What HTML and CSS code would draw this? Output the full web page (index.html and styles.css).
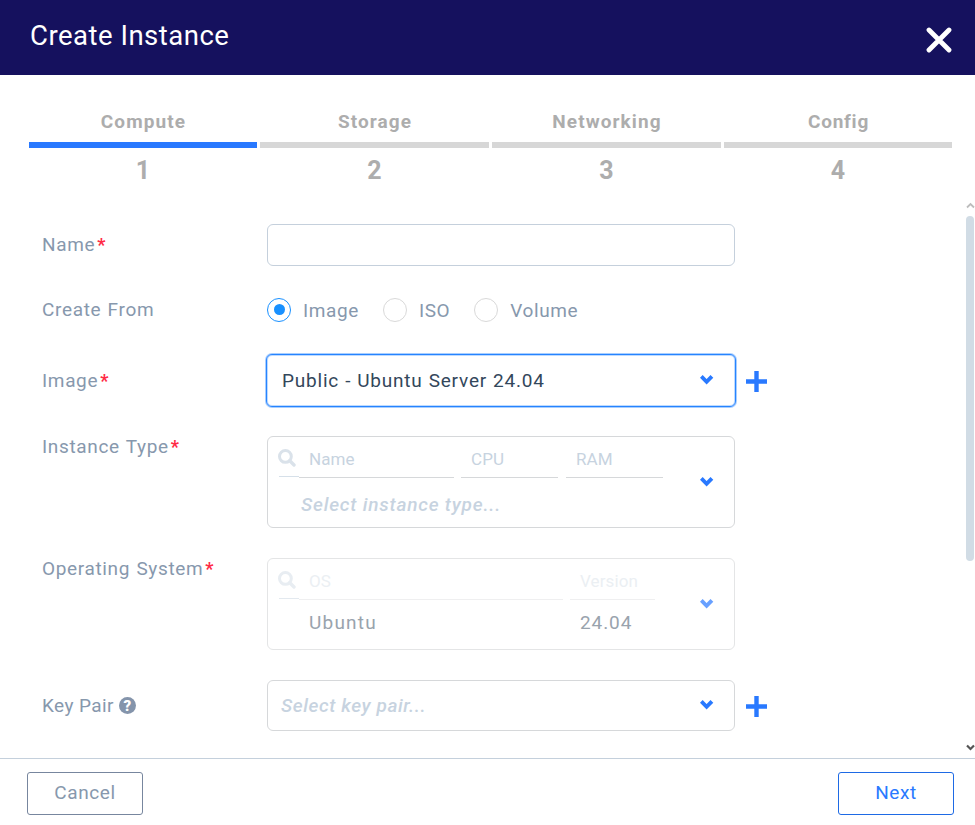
FILE: index.html
```html
<!DOCTYPE html>
<html lang="en">
<head>
<meta charset="utf-8">
<title>Create Instance</title>
<link rel="stylesheet" href="styles.css">
</head>
<body>
<svg class="defs" aria-hidden="true">
  <symbol id="chevron" viewBox="0 0 14 10"><path d="M1.3 1.4 6.6 6.8 11.9 1.4" fill="none" stroke="currentColor" stroke-width="3.9"/></symbol>
  <symbol id="plus" viewBox="0 0 21 21"><path d="M10.5 0v21M0 10.5h21" fill="none" stroke="currentColor" stroke-width="4.4"/></symbol>
  <symbol id="search" viewBox="0 0 18 18"><circle cx="7.4" cy="7.4" r="5.9" fill="none" stroke="currentColor" stroke-width="3"/><path d="m11.8 11.8 4.2 4.2" stroke="currentColor" stroke-width="3.4" stroke-linecap="round"/></symbol>
</svg>
<div class="dialog">
  <header class="header">
    <h1 class="title">Create Instance</h1>
    <svg class="close" viewBox="0 0 26 26"><path d="M3 3 23 23M23 3 3 23" fill="none" stroke="currentColor" stroke-width="4.8" stroke-linecap="round"/></svg>
  </header>
  <nav class="steps">
    <div class="step active"><span class="step-name">Compute</span><span class="bar"></span><span class="step-no">1</span></div>
    <div class="step"><span class="step-name">Storage</span><span class="bar"></span><span class="step-no">2</span></div>
    <div class="step"><span class="step-name">Networking</span><span class="bar"></span><span class="step-no">3</span></div>
    <div class="step"><span class="step-name config">Config</span><span class="bar"></span><span class="step-no">4</span></div>
  </nav>
  <main class="body">
    <form class="form">
      <div class="row name-row"><label class="label">Name<b class="req">*</b></label><input class="box input" type="text"></div>
      <div class="row from-row"><label class="label">Create From</label>
        <div class="radios">
          <span class="radio on"></span><span class="radio-text">Image</span>
          <span class="radio"></span><span class="radio-text">ISO</span>
          <span class="radio"></span><span class="radio-text">Volume</span>
        </div>
      </div>
      <div class="row image-row"><label class="label">Image<b class="req">*</b></label>
        <div class="box select focus"><span class="value">Public - Ubuntu Server 24.04</span><svg class="chevron"><use href="#chevron"/></svg></div>
        <svg class="plus"><use href="#plus"/></svg>
      </div>
      <div class="row table-row"><label class="label">Instance Type<b class="req">*</b></label>
        <div class="box table">
          <div class="cols">
            <div class="filters"><span class="search"><svg><use href="#search"/></svg></span><span class="filter f-name">Name</span><span class="filter f-cpu">CPU</span><span class="filter f-ram">RAM</span></div>
            <div class="placeholder type-hint">Select instance type...</div>
          </div>
          <svg class="chevron"><use href="#chevron"/></svg>
        </div>
      </div>
      <div class="row table-row"><label class="label">Operating System<b class="req">*</b></label>
        <div class="box table disabled">
          <div class="cols">
            <div class="filters"><span class="search"><svg><use href="#search"/></svg></span><span class="filter f-os">OS</span><span class="filter f-version">Version</span></div>
            <div class="values"><span class="v-os">Ubuntu</span><span class="v-version">24.04</span></div>
          </div>
          <svg class="chevron"><use href="#chevron"/></svg>
        </div>
      </div>
      <div class="row key-row"><label class="label key-label">Key Pair<span class="help">?</span></label>
        <div class="box select"><span class="placeholder key-hint">Select key pair...</span><svg class="chevron"><use href="#chevron"/></svg></div>
        <svg class="plus"><use href="#plus"/></svg>
      </div>
    </form>
    <div class="scrollbar">
      <svg class="arrow up" viewBox="0 0 9 7"><path d="M1 5.5 4.5 2 8 5.5" fill="none" stroke="currentColor" stroke-width="1.8"/></svg>
      <span class="thumb"></span>
      <svg class="arrow down" viewBox="0 0 9 7"><path d="M1 1.5 4.5 5 8 1.5" fill="none" stroke="currentColor" stroke-width="2.2"/></svg>
    </div>
  </main>
  <footer class="footer"><button class="btn cancel">Cancel</button><button class="btn next">Next</button></footer>
</div>
</body>
</html>
```
FILE: styles.css
```css
* { box-sizing: border-box; }
body { margin: 0; background: #fff; font-family: Roboto, "Liberation Sans", sans-serif; font-size: 19px; letter-spacing: .5px; color: #8798ad; }
.defs { display: none; }
.dialog { width: 975px; height: 825px; display: flex; flex-direction: column; overflow: hidden; }
.header { height: 75px; flex: none; background: #15115e; color: #fff; display: flex; justify-content: space-between; padding: 20px 23px 0 30px; }
.title { margin: 0; font-size: 27.5px; line-height: 32px; font-weight: 400; letter-spacing: .5px; }
.close { width: 26px; height: 26px; margin-top: 7px; }
.steps { flex: none; height: 125px; padding: 33px 23px 0 29px; display: grid; grid-template-columns: 228px 229px 229px 228px; column-gap: 3px; align-items: start; }
.step { display: flex; flex-direction: column; align-items: center; color: #adadad; font-weight: 700; }
.step-name { line-height: 28px; margin-bottom: 6px; letter-spacing: 1.1px; margin-right: -1px; }
.config { letter-spacing: .75px; }
.bar { width: 100%; height: 6px; background: #d7d7d7; }
.active .bar { background: #2979ff; }
.step-no { font-size: 25px; line-height: 30px; margin-top: 8px; letter-spacing: 0; }
.body { flex: none; height: 558px; display: flex; justify-content: space-between; overflow: hidden; }
.form { padding: 24px 0 0 42px; }
.row { display: flex; align-items: flex-start; }
.label { width: 225px; line-height: 24px; white-space: nowrap; letter-spacing: .65px; word-spacing: 1px; }
.req { display: inline-block; height: 20px; color: #ff2b45; font-size: 18px; font-weight: 700; margin-left: 2px; letter-spacing: 0; }
.box { width: 468px; border: 1px solid #d6d8da; border-radius: 6px; background: #fff; }
.name-row { height: 42px; margin-bottom: 32px; }
.name-row .label { margin-top: 9px; }
.input { height: 42px; border-color: #c5d0dc; outline: none; }
.from-row { height: 24px; margin-bottom: 32px; }
.radios { display: flex; align-items: center; height: 24px; letter-spacing: .6px; }
.radio { width: 24px; height: 24px; border: 1px solid #d9d9d9; border-radius: 50%; display: flex; align-items: center; justify-content: center; }
.radio.on { border-color: #1890ff; }
.radio.on::before { content: ""; width: 11px; height: 11px; border-radius: 50%; background: #1890ff; margin-bottom: 2px; }
.radio-text { margin: 1px 24px 0 12px; line-height: 22px; }
.image-row { height: 53px; margin-bottom: 29px; }
.image-row .label { width: 224px; margin-top: 15px; }
.select { display: flex; align-items: center; justify-content: space-between; height: 51px; padding: 0 20px 0 13px; }
.select.focus { width: 470px; height: 53px; border-color: #2684ff; box-shadow: 0 0 0 1px rgba(38, 132, 255, .4), inset 0 0 0 1px rgba(38, 132, 255, .3); padding: 0 21px 0 15px; }
.value { color: #33475b; letter-spacing: .8px; word-spacing: .5px; }
.chevron { width: 14px; height: 10px; color: #2979ff; flex: none; }
.select .chevron { margin-bottom: 1px; }
.plus { width: 21px; height: 21px; color: #2979ff; margin: 17px 0 0 11px; }
.image-row .plus { margin-left: 10px; }
.table-row { height: 92px; margin-bottom: 30px; }
.table-row .label { margin-top: -1px; }
.table { height: 92px; display: flex; align-items: center; justify-content: space-between; padding: 0 20px 0 11px; color: #c7d3e0; }
.cols { align-self: stretch; display: flex; flex-direction: column; }
.filters { display: flex; height: 41px; font-size: 17px; letter-spacing: .1px; }
.search { width: 20px; height: 40px; padding-top: 12px; border-bottom: 1px solid #d6e0e9; color: #dae2ea; }
.search svg { display: block; width: 18px; height: 18px; margin-left: -1px; }
.filter { height: 41px; line-height: 44px; border-bottom: 1px solid #d6d8da; padding-left: 10px; }
.f-name { width: 155px; margin-right: 7px; }
.f-cpu { width: 97px; margin-right: 8px; }
.f-ram { width: 97px; }
.f-os { width: 264px; margin-right: 7px; }
.f-version { width: 85px; }
.placeholder { color: #c7d3e0; font-style: italic; font-weight: 500; letter-spacing: .8px; }
.key-hint { letter-spacing: .6px; }
.type-hint { margin: 15px 0 0 22px; line-height: 24px; }
.disabled { border-color: #e4e5e6; }
.disabled .chevron { opacity: .7; }
.disabled .filters { color: #ebeff3; }
.disabled .filter { border-color: #efeff0; }
.disabled .search { color: #e8edf2; border-color: #e3e9ef; }
.values { display: flex; margin-top: 11px; line-height: 24px; color: #99a3ad; letter-spacing: .9px; }
.v-os { width: 271px; margin-left: 30px; letter-spacing: 1.2px; }
.key-row .label { margin-top: 14px; }
.key-label { display: flex; align-items: center; letter-spacing: .4px; word-spacing: 0; }
.help { width: 17px; height: 17px; margin: -2px 0 0 5px; border-radius: 50%; background: #8494ab; color: #fff; font-size: 15px; line-height: 18px; font-weight: 900; letter-spacing: 0; text-align: center; }
.key-row .plus { margin-top: 16px; }
.scrollbar { width: 9px; display: flex; flex-direction: column; align-items: flex-start; }
.arrow { width: 9px; height: 7px; flex: none; }
.up { margin-top: 2px; color: #bdbdbd; }
.thumb { width: 8px; height: 345px; margin-top: 7px; border-radius: 4px; background: #d1dce5; }
.down { color: #555; margin-top: auto; margin-bottom: 7px; }
.footer { flex: 1; border-top: 1px solid #c4d0dc; display: flex; justify-content: space-between; padding: 13px 21px 0 27px; }
.btn { width: 116px; height: 43px; background: #fff; border: 1px solid; border-radius: 3px; font: inherit; letter-spacing: .6px; padding: 0 0 2px; }
.cancel { color: #8798ad; border-color: #77869e; }
.next { color: #2979ff; border-color: #1e6ae5; }
```
